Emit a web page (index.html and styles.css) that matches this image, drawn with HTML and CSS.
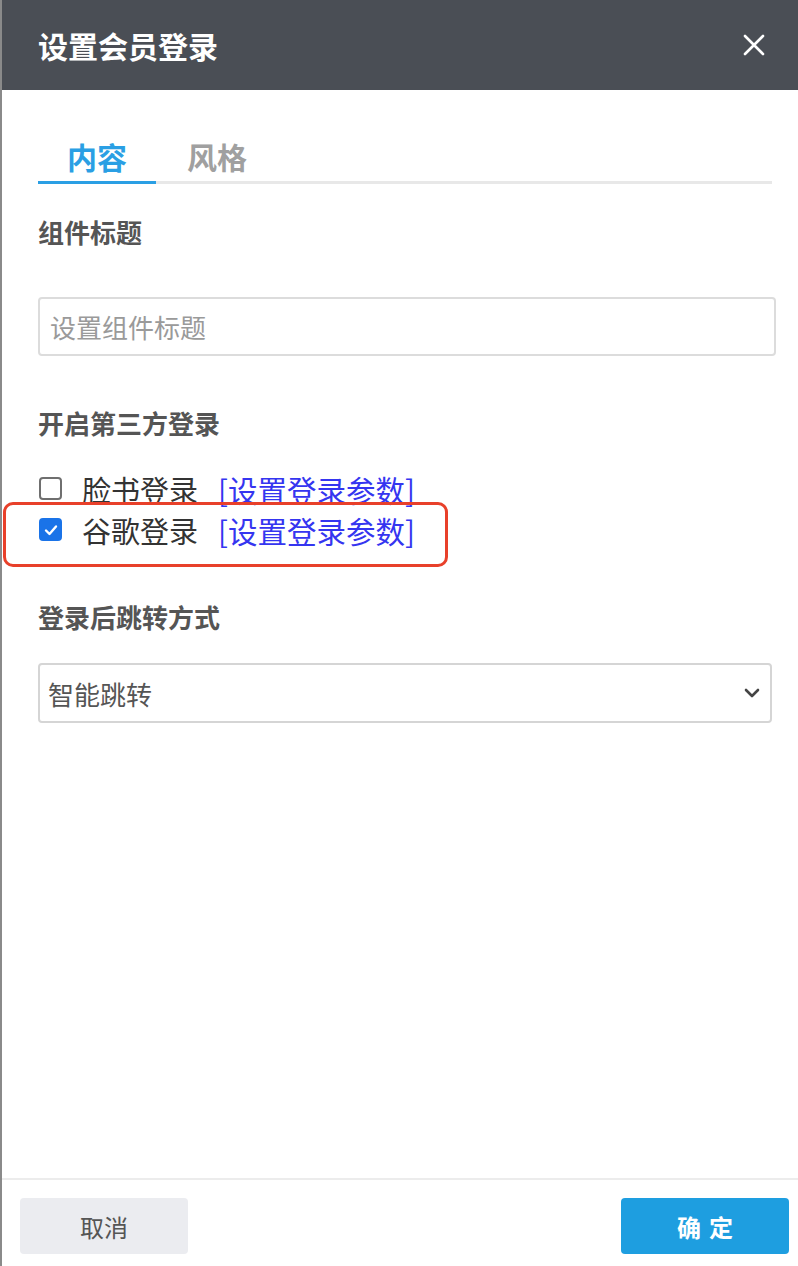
FILE: index.html
```html
<!DOCTYPE html>
<html lang="zh-CN">
<head>
<meta charset="utf-8">
<title>设置会员登录</title>
<link rel="stylesheet" href="styles.css">
</head>
<body>
<div class="dialog">
  <div class="header">
    <div class="title">设置会员登录</div>
    <svg class="close" width="22" height="22" viewBox="0 0 22 22"><path d="M2 2 L20 20 M20 2 L2 20" stroke="#fff" stroke-width="2.6" stroke-linecap="round"/></svg>
  </div>
  <div class="main">
    <div class="tabs">
      <div class="tab active">内容</div>
      <div class="tab">风格</div>
    </div>
    <div class="label first">组件标题</div>
    <div class="input"><span class="placeholder">设置组件标题</span></div>
    <div class="label">开启第三方登录</div>
    <div class="checks">
      <div class="row">
        <span class="box"></span>
        <span class="name">脸书登录</span>
        <span class="link">[设置登录参数]</span>
      </div>
      <div class="row">
        <span class="box checked"><svg width="16" height="16" viewBox="0 0 16 16"><path d="M3 8.5 L6.5 12 L13 4.5" fill="none" stroke="#fff" stroke-width="2.4" stroke-linecap="round" stroke-linejoin="round"/></svg></span>
        <span class="name">谷歌登录</span>
        <span class="link">[设置登录参数]</span>
      </div>
    </div>
    <div class="label">登录后跳转方式</div>
    <div class="select">
      <span class="value">智能跳转</span>
      <svg class="chev" width="16" height="10" viewBox="0 0 16 10"><path d="M2 2 L8 8 L14 2" fill="none" stroke="#444" stroke-width="2.6" stroke-linecap="round" stroke-linejoin="round"/></svg>
    </div>
  </div>
  <div class="footer">
    <div class="btn cancel">取消</div>
    <div class="btn ok">确定</div>
  </div>
  <div class="highlight"></div>
</div>
</body>
</html>
```

FILE: styles.css
```css
html, body {
  margin: 0;
  padding: 0;
  background: #fff;
}
body {
  font-family: "Noto Sans CJK SC", "Noto Sans", sans-serif;
}
.dialog {
  position: relative;
  width: 798px;
  height: 1266px;
  box-sizing: border-box;
  border-left: 2px solid #8a8a8a;
  display: flex;
  flex-direction: column;
  background: #fff;
}
.header {
  height: 90px;
  flex: none;
  background: #4a4e55;
  display: flex;
  align-items: center;
  justify-content: space-between;
  padding: 0 33px 0 36px;
  box-sizing: border-box;
}
.title {
  color: #fff;
  font-size: 30px;
  font-weight: bold;
  line-height: 1;
}
.close {
  display: block;
}
.main {
  flex: 1;
  padding: 0 22px 0 36px;
}
.tabs {
  display: flex;
  margin-top: 47px;
  margin-right: 4px;
  border-bottom: 3px solid #e8e8e8;
}
.tab {
  box-sizing: border-box;
  padding: 0 29px 5px 29px;
  font-size: 30px;
  line-height: 39px;
  margin-bottom: -3px;
  border-bottom: 3px solid transparent;
  color: #a0a0a0;
  font-weight: bold;
}
.tab.active {
  color: #2a9fe4;
  border-bottom-color: #2a9fe4;
}
.tab + .tab {
  padding-left: 31px;
}
.label {
  font-size: 26px;
  line-height: 30px;
  font-weight: bold;
  color: #555;
  margin-top: 52px;
}
.label.first {
  margin-top: 33px;
}
.input {
  margin-top: 50px;
  height: 59px;
  box-sizing: border-box;
  border: 2px solid #dcdcdc;
  border-radius: 4px;
  display: flex;
  align-items: center;
  padding-left: 10px;
}
.placeholder {
  font-size: 26px;
  color: #9a9a9a;
}
.checks {
  margin-top: 30px;
}
.row {
  height: 41px;
  display: flex;
  align-items: center;
}
.box {
  width: 23px;
  height: 23px;
  box-sizing: border-box;
  border: 2px solid #6f6f6f;
  border-radius: 4px;
  margin-left: 1px;
  display: flex;
  align-items: center;
  justify-content: center;
}
.box.checked {
  background: #1a73e8;
  border-color: #1a73e8;
}
.name {
  margin-left: 20px;
  font-size: 29px;
  color: #333;
}
.link {
  margin-left: 20px;
  font-size: 29.5px;
  color: #3535f0;
}
.select {
  margin-top: 31px;
  margin-right: 4px;
  height: 60px;
  box-sizing: border-box;
  border: 2px solid #d5d5d5;
  border-radius: 4px;
  display: flex;
  align-items: center;
  justify-content: space-between;
  padding: 0 10px 0 8px;
}
.value {
  font-size: 26px;
  color: #555;
}
.footer {
  flex: none;
  border-top: 2px solid #ececec;
  display: flex;
  justify-content: space-between;
  padding: 18px 9px 12px 18px;
}
.btn {
  width: 168px;
  height: 56px;
  border-radius: 4px;
  display: flex;
  align-items: center;
  justify-content: center;
  font-size: 24px;
}
.cancel {
  background: #ebecf0;
  color: #555;
}
.ok {
  background: #1e9ee0;
  color: #fff;
  font-weight: bold;
  letter-spacing: 8px;
  text-indent: 8px;
}
.highlight {
  position: absolute;
  left: 1px;
  top: 502px;
  width: 445px;
  height: 65px;
  box-sizing: border-box;
  border: 3px solid #e8402a;
  border-radius: 10px;
  pointer-events: none;
}
```
